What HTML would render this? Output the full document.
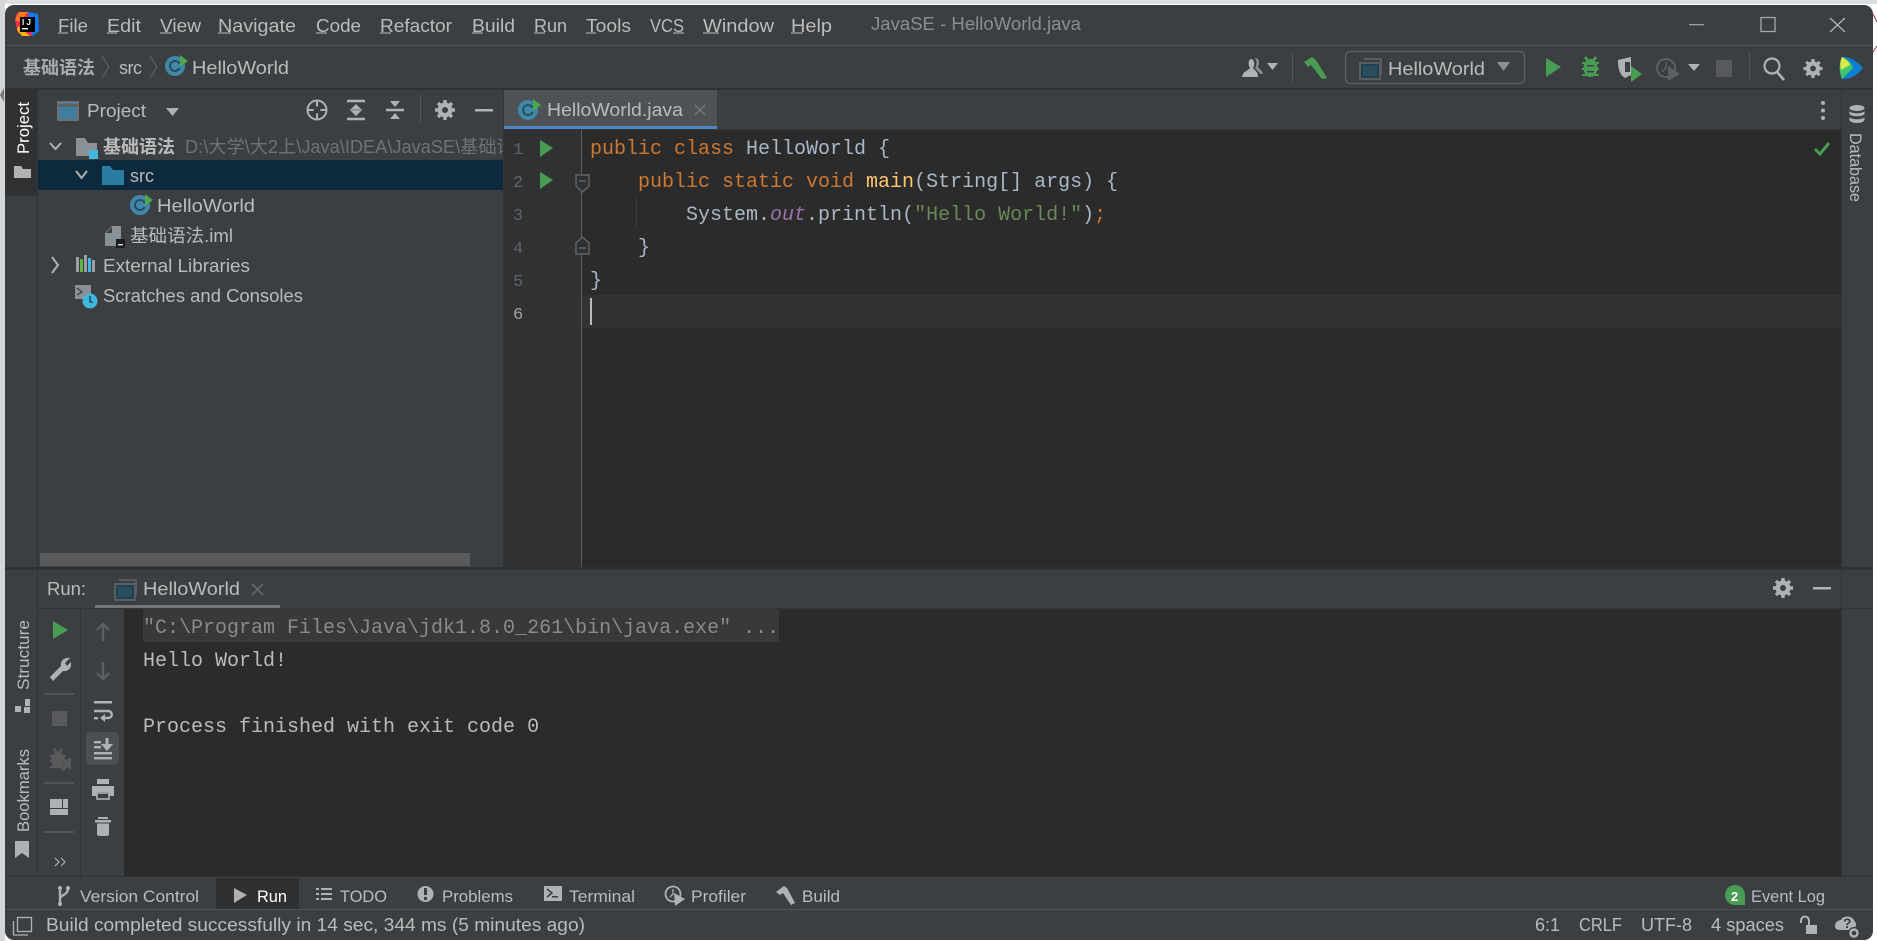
<!DOCTYPE html>
<html><head><meta charset="utf-8"><title>JavaSE - HelloWorld.java</title>
<style>
html,body{margin:0;padding:0;width:1877px;height:941px;overflow:hidden;background:#fff}
svg{display:block}
text{font-family:"Liberation Sans","Noto Sans CJK SC",sans-serif;font-size:18px;fill:#bbbbbb;white-space:pre}
.m{font-family:"Liberation Mono",monospace;font-size:20px;fill:#a9b7c6}
.c{font-family:"Liberation Mono",monospace;font-size:20px;fill:#bbbbbb}
.k{fill:#cc7832}.s{fill:#6a8759}.y{fill:#ffc66d}.o{fill:#9876aa;font-style:italic}
.n{font-family:"Liberation Mono",monospace;font-size:17px;fill:#606366}
.g{fill:#afb1b3}.l{stroke:#afb1b3;fill:none;stroke-width:2}
</style></head><body>
<svg width="1877" height="941" viewBox="0 0 1877 941" xmlns="http://www.w3.org/2000/svg">
<defs>
<g id="cls"><circle cx="10" cy="11" r="10" fill="#3f88aa"/><circle cx="10" cy="11" r="5" fill="none" stroke="#2b4c5c" stroke-width="2"/><rect x="13" y="9" width="4" height="4" fill="#3f88aa"/><path d="M15 0L23 6L15 12Z" fill="#4ca64c"/></g>
<g id="run"><rect x="0" y="6" width="20" height="16" fill="#22404d" stroke="#5a5d5f" stroke-width="2"/><rect x="3" y="9" width="14" height="10" fill="#2a4e5e"/><path d="M4 2H21V17" fill="none" stroke="#5a5d5f" stroke-width="2"/></g>
<g id="gear"><circle cx="10" cy="10" r="5.5" fill="none" stroke="#afb1b3" stroke-width="4"/><path d="M10 0V20M0 10H20M3 3L17 17M17 3L3 17" stroke="#afb1b3" stroke-width="3.4"/><circle cx="10" cy="10" r="3" fill="#3c3f41"/></g>
</defs>

<!-- outside -->
<rect width="1877" height="941" fill="#ffffff"/>
<rect width="1877" height="4" fill="#dcdee0"/>
<rect x="0" y="0" width="5" height="941" fill="#d4d6d8"/>
<path d="M0 95L4 88V102Z" fill="#777"/>
<path d="M1873 14L1877 22M1873 52L1877 46" stroke="#a34" stroke-width="1"/>
<!-- window -->
<rect x="5" y="5" width="1868" height="935" rx="9" fill="#3c3f41"/>

<!-- separators -->
<rect x="5" y="45" width="1868" height="1" fill="#515456"/>
<rect x="5" y="88" width="1868" height="2" fill="#2f3133"/>

<!-- logo -->
<g>
<path d="M17 13L28 12L38 16L39 31L30 36L18 33L15 20Z" fill="#fe2857"/>
<path d="M28 12L38 14L39 31L32 36Z" fill="#087cfa"/>
<path d="M15 20L19 12L28 12L20 22Z" fill="#fe7a1b"/>
<path d="M17 30L22 36L30 36L18 26Z" fill="#fdb60d"/>
<rect x="20" y="17" width="15" height="15" fill="#000"/>
<text x="22" y="25" style="font-size:8px;font-weight:bold;fill:#fff" textLength="9">IJ</text>
<rect x="22" y="28" width="6" height="1.4" fill="#fff"/>
</g>

<!-- menu -->
<g style="font-size:18px">
<text x="58" y="32" textLength="30" lengthAdjust="spacingAndGlyphs">File</text>
<text x="107" y="32" textLength="34" lengthAdjust="spacingAndGlyphs">Edit</text>
<text x="160" y="32" textLength="41" lengthAdjust="spacingAndGlyphs">View</text>
<text x="218" y="32" textLength="78" lengthAdjust="spacingAndGlyphs">Navigate</text>
<text x="316" y="32" textLength="45" lengthAdjust="spacingAndGlyphs">Code</text>
<text x="380" y="32" textLength="72" lengthAdjust="spacingAndGlyphs">Refactor</text>
<text x="472" y="32" textLength="43" lengthAdjust="spacingAndGlyphs">Build</text>
<text x="534" y="32" textLength="33" lengthAdjust="spacingAndGlyphs">Run</text>
<text x="586" y="32" textLength="45" lengthAdjust="spacingAndGlyphs">Tools</text>
<text x="650" y="32" textLength="34" lengthAdjust="spacingAndGlyphs">VCS</text>
<text x="703" y="32" textLength="71" lengthAdjust="spacingAndGlyphs">Window</text>
<text x="791" y="32" textLength="41" lengthAdjust="spacingAndGlyphs">Help</text>
<path d="M58 33H68M107 33H117M160 33H172M218 33H231M316 33H327M380 33H391M472 33H483M534 33H545M586 33H596M673 33H684M703 33H719M791 33H803" stroke="#bbbbbb" stroke-width="1"/>
<text x="871" y="30" textLength="210" lengthAdjust="spacingAndGlyphs" style="fill:#8b8d8f">JavaSE - HelloWorld.java</text>
</g>
<!-- win buttons -->
<rect x="1689" y="24" width="15" height="1.3" fill="#9a9c9e"/>
<rect x="1761" y="17.500" width="14" height="14" fill="none" stroke="#a5a7a9" stroke-width="1.300"/>
<path d="M1830 18L1845 32M1845 18L1830 32" stroke="#b0b2b4" stroke-width="1.300"/>

<!-- breadcrumb -->
<text x="23" y="74" textLength="72" lengthAdjust="spacingAndGlyphs" style="font-weight:bold;fill:#a9abad">基础语法</text>
<path d="M102 56L109 67L102 78" fill="none" stroke="#5c5f61" stroke-width="1.200"/>
<text x="119" y="74" textLength="23">src</text>
<path d="M150 56L157 67L150 78" fill="none" stroke="#5c5f61" stroke-width="1.200"/>
<use href="#cls" x="165" y="55"/>
<text x="192" y="74" textLength="97" lengthAdjust="spacingAndGlyphs">HelloWorld</text>

<!-- top toolbar right -->
<path d="M1251 59C1248 60 1248 65 1250 68C1248 71 1243 71 1242 77H1258C1258 71 1255 71 1253 68C1255 65 1255 60 1251 59Z" fill="#afb1b3"/>
<path d="M1255 58C1259 58 1260 62 1258 67C1260 70 1262 70 1263 74H1260C1259 71 1256 70 1255 68C1257 65 1257 61 1255 58Z" fill="#8b8d8f"/>
<path d="M1267 63H1278L1272.500 70Z" fill="#afb1b3"/>
<rect x="1292" y="52" width="1" height="30" fill="#515456"/>
<path d="M1304 62L1312 57L1316 60L1327 78L1322 79L1311 65L1308 67Z" fill="#4a9c52"/>
<rect x="1345.500" y="51.500" width="179" height="32" rx="5" fill="#3c3f41" stroke="#5e6163" stroke-width="1.300"/>
<use href="#run" x="1360" y="57"/>
<text x="1388" y="75" textLength="97" lengthAdjust="spacingAndGlyphs">HelloWorld</text>
<path d="M1497 62H1510L1503.500 71Z" fill="#8d8f91"/>
<path d="M1546 58L1561 67L1546 77Z" fill="#499c54"/>
<g fill="#499c54"><ellipse cx="1590.500" cy="68" rx="7" ry="9"/><rect x="1582" y="62" width="17" height="2"/><rect x="1582" y="68" width="17" height="2"/><rect x="1582" y="74" width="17" height="2"/><path d="M1586 56L1589 60H1592L1595 56L1597 58L1594 62H1587L1584 58Z"/></g>
<rect x="1587" y="65" width="7" height="1.500" fill="#3c3f41"/><rect x="1587" y="71" width="7" height="1.500" fill="#3c3f41"/>
<path d="M1618 60L1631 57V75L1625 78C1620 75 1618 70 1618 60Z" fill="#afb1b3"/><path d="M1625 62H1630V72H1625Z" fill="#3c3f41"/>
<path d="M1631 66L1642 74L1631 82Z" fill="#499c54"/>
<circle cx="1666" cy="68" r="9" fill="none" stroke="#5d5f61" stroke-width="2"/><path d="M1666 62V68L1662 72" fill="none" stroke="#5d5f61" stroke-width="1.500"/><path d="M1668 66L1680 74L1668 81Z" fill="#5d5f61"/>
<path d="M1688 64H1700L1694 71Z" fill="#afb1b3"/>
<rect x="1716" y="60" width="16" height="17" fill="#59595b"/>
<rect x="1749" y="52" width="1" height="30" fill="#515456"/>
<circle cx="1772" cy="66" r="7.500" fill="none" stroke="#afb1b3" stroke-width="2.200"/><path d="M1777 72L1784 80" stroke="#afb1b3" stroke-width="2.600"/>
<use href="#gear" transform="translate(1803.500,59) scale(.95)"/>
<path d="M1842 57C1851 57 1857 61 1863 68C1858 75 1851 79 1842 79C1839 72 1839 64 1842 57Z" fill="#0b7fd1"/>
<path d="M1842 57C1849 60 1852 64 1853 68L1842 79C1839 72 1839 64 1842 57Z" fill="#3ec46d"/>
<path d="M1842 57C1846 59 1849 62 1850 65L1841 70C1840 65 1840 61 1842 57Z" fill="#d9e84a"/>

<!-- left stripe -->
<rect x="5" y="90" width="32" height="106" fill="#2f3133"/>
<rect x="37" y="90" width="1" height="787" fill="#323436"/>
<text transform="translate(29,154) rotate(-90)" textLength="52" lengthAdjust="spacingAndGlyphs" style="fill:#ffffff;font-size:17px">Project</text>
<path d="M14 166H21L23 169H31V178H14Z" fill="#b0b2b4"/>

<text transform="translate(29,690) rotate(-90)" textLength="70" lengthAdjust="spacingAndGlyphs" style="font-size:17px">Structure</text>
<g fill="#afb1b3"><rect x="25" y="699" width="5" height="7"/><rect x="15" y="706" width="6" height="6"/><rect x="24" y="707" width="6" height="6"/></g>
<text transform="translate(29,832) rotate(-90)" textLength="83" lengthAdjust="spacingAndGlyphs" style="font-size:17px">Bookmarks</text>
<path d="M15 841H29V858L22 853L15 858Z" fill="#afb1b3"/>

<!-- project panel -->
<rect x="58" y="102" width="20" height="18" fill="#3d7f9c" stroke="#6e7274" stroke-width="2"/>
<path d="M58 105.500H78" stroke="#5e6264" stroke-width="3"/>
<text x="87" y="117" textLength="59" lengthAdjust="spacingAndGlyphs">Project</text>
<path d="M166 108H179L172.500 116Z" fill="#afb1b3"/>
<circle cx="317" cy="110" r="9.500" fill="none" stroke="#afb1b3" stroke-width="2"/>
<path d="M317 100V120M307 110H327" stroke="#afb1b3" stroke-width="2"/><circle cx="317" cy="110" r="3.500" fill="#3c3f41"/>
<path d="M347 101H365M347 119H365" stroke="#afb1b3" stroke-width="2.500"/>
<path d="M356 104L351 109H361ZM356 116L351 111H361Z" fill="#afb1b3"/><rect x="350" y="109.300" width="12" height="1.500" fill="#afb1b3"/>
<path d="M386 110H404" stroke="#afb1b3" stroke-width="2.500"/>
<path d="M395 107L390 101H400ZM395 113L390 119H400Z" fill="#afb1b3"/>
<rect x="420" y="95" width="1" height="29" fill="#515456"/>
<use href="#gear" x="435" y="100"/>
<rect x="475" y="109" width="18" height="2.500" fill="#afb1b3"/>

<!-- tree -->
<rect x="38" y="160" width="465" height="30" fill="#0d293e"/>
<path d="M50 143L55.500 149L61 143" class="l" stroke-width="1.500"/>
<path d="M76 171L81.500 178L87 171" class="l" stroke-width="1.500"/>
<path d="M52 257L58 265L52 273" class="l" stroke-width="1.500"/>
<path d="M76 138H85L88 143H97V156H76Z" fill="#8a9196"/>
<rect x="89" y="150" width="9" height="9" fill="#40b6e0"/>
<text x="103" y="153" textLength="72" lengthAdjust="spacingAndGlyphs" style="font-weight:bold;fill:#bbbbbb">基础语法</text>
<svg x="0" y="130" width="503" height="40"><text x="185" y="23" style="fill:#6f7173" textLength="348" lengthAdjust="spacingAndGlyphs">D:\大学\大2上\Java\IDEA\JavaSE\基础语法</text></svg>
<path d="M102 166H110L113 170H124V185H102Z" fill="#2a7ba4"/>
<text x="130" y="182" textLength="24" style="fill:#bbbbbb">src</text>
<use href="#cls" x="130" y="194"/>
<text x="157" y="212" textLength="98" lengthAdjust="spacingAndGlyphs">HelloWorld</text>
<path d="M112 226H121V240H125V246H105V233Z" fill="#8a9196"/>
<path d="M106 233L112 227V233Z" fill="#3c3f41"/>
<rect x="116" y="239" width="9" height="9" fill="#1d1d1f"/><rect x="118" y="244" width="5" height="1.400" fill="#ddd"/>
<text x="130" y="242" textLength="103" lengthAdjust="spacingAndGlyphs">基础语法.iml</text>
<rect x="76" y="257" width="3" height="15" fill="#9aa0a4"/><rect x="80" y="259" width="3" height="13" fill="#62b543"/><rect x="84" y="255" width="3" height="17" fill="#9aa0a4"/><rect x="88" y="258" width="3" height="14" fill="#40b6e0"/><rect x="92" y="260" width="3" height="12" fill="#9aa0a4"/>
<text x="103" y="272" textLength="147" lengthAdjust="spacingAndGlyphs">External Libraries</text>
<rect x="75" y="285" width="16" height="14" fill="#8a9196"/><path d="M77 288L82 292L77 295" fill="none" stroke="#3c3f41" stroke-width="1.300"/>
<circle cx="90" cy="301" r="7.500" fill="#40b6e0"/><path d="M90 296V302H93" fill="none" stroke="#1d3a48" stroke-width="1.300"/>
<text x="103" y="302" textLength="200" lengthAdjust="spacingAndGlyphs">Scratches and Consoles</text>
<rect x="40" y="553" width="430" height="13" fill="#585a5c"/>
<rect x="5" y="567" width="1868" height="3" fill="#2f3133"/>

<!-- tab strip -->
<rect x="504" y="90" width="213" height="37" fill="#4e5254"/>
<rect x="504" y="126" width="213" height="4" fill="#4a88c7"/>
<rect x="503" y="90" width="1" height="477" fill="#323436"/>
<use href="#cls" x="518" y="99"/>
<text x="547" y="116" textLength="136" lengthAdjust="spacingAndGlyphs">HelloWorld.java</text>
<path d="M695 105L705 115M705 105L695 115" stroke="#777a7c" stroke-width="1.300"/>
<circle cx="1823" cy="103" r="2" fill="#afb1b3"/><circle cx="1823" cy="110.500" r="2" fill="#afb1b3"/><circle cx="1823" cy="118" r="2" fill="#afb1b3"/>
<rect x="504" y="129" width="1337" height="1" fill="#323436"/>

<!-- editor -->
<rect x="504" y="130" width="1337" height="437" fill="#2b2b2b"/>
<rect x="504" y="130" width="77" height="437" fill="#2f3133"/>
<rect x="581" y="130" width="1" height="437" fill="#5a5d5f"/>
<rect x="504" y="295" width="77" height="33" fill="#323232"/>
<rect x="582" y="295" width="1259" height="33" fill="#323232"/>
<rect x="636" y="197" width="1" height="32" fill="#3a3a3a"/>
<text class="n" x="513" y="154">1</text>
<text class="n" x="513" y="187">2</text>
<text class="n" x="513" y="220">3</text>
<text class="n" x="513" y="253">4</text>
<text class="n" x="513" y="286">5</text>
<text class="n" x="513" y="319" style="fill:#a4a3a3">6</text>
<path d="M540 140L553 148L540 157ZM540 172L553 180L540 189Z" fill="#499c54"/>
<path d="M576 175H589V186L582.500 192L576 186Z" fill="#2f3133" stroke="#5f6264" stroke-width="1.500"/><path d="M579 181H586" stroke="#5f6264" stroke-width="1.500"/>
<path d="M576 254H589V243L582.500 237L576 243Z" fill="#2f3133" stroke="#5f6264" stroke-width="1.500"/><path d="M579 248H586" stroke="#5f6264" stroke-width="1.500"/>
<text class="m" x="590" y="154"><tspan class="k">public class </tspan>HelloWorld {</text>
<text class="m" x="638" y="187"><tspan class="k">public static void </tspan><tspan class="y">main</tspan>(String[] args) {</text>
<text class="m" x="686" y="220">System.<tspan class="o">out</tspan>.println(<tspan class="s">"Hello World!"</tspan>)<tspan class="k">;</tspan></text>
<text class="m" x="638" y="253">}</text>
<text class="m" x="590" y="286">}</text>
<rect x="590" y="298" width="2" height="27" fill="#bbbbbb"/>
<path d="M1815 149L1820 154L1829 143" fill="none" stroke="#499c54" stroke-width="3"/>

<!-- right stripe -->
<rect x="1841" y="90" width="1" height="787" fill="#323436"/>
<g fill="#afb1b3"><ellipse cx="1857" cy="108" rx="7.500" ry="3"/><path d="M1849.500 111C1851 114 1863 114 1864.500 111V114C1863 117 1851 117 1849.500 114Z"/><path d="M1849.500 117C1851 120 1863 120 1864.500 117V120C1863 124 1851 124 1849.500 120Z"/></g>
<text transform="translate(1850,133) rotate(90)" textLength="69" lengthAdjust="spacingAndGlyphs" style="font-size:17px">Database</text>

<!-- run panel -->
<text x="47" y="595" textLength="39" lengthAdjust="spacingAndGlyphs">Run:</text>
<use href="#run" x="115" y="578"/>
<text x="143" y="595" textLength="97" lengthAdjust="spacingAndGlyphs">HelloWorld</text>
<path d="M252 584L263 595M263 584L252 595" stroke="#6f7274" stroke-width="1.300"/>
<rect x="95" y="605" width="185" height="4" fill="#737577"/>
<rect x="38" y="608" width="1835" height="1" fill="#323436"/>
<use href="#gear" x="1773" y="578"/>
<rect x="1813" y="587" width="18" height="2.500" fill="#afb1b3"/>

<rect x="80" y="609" width="1" height="268" fill="#323436"/>
<rect x="124" y="609" width="1717" height="268" fill="#2b2b2b"/>
<rect x="143" y="609" width="636" height="33" fill="#393939"/>
<text class="c" x="143" y="633" style="fill:#8a8a8a">"C:\Program Files\Java\jdk1.8.0_261\bin\java.exe" ...</text>
<text class="c" x="143" y="666">Hello World!</text>
<text class="c" x="143" y="732">Process finished with exit code 0</text>

<!-- run col1 -->
<path d="M53 621L68 630L53 639Z" fill="#499c54"/>
<path d="M50 677L61 666C60 661 64 657 70 658L65 663L67 666L71 662C72 668 68 672 63 671L53 681Z" fill="#afb1b3"/>
<rect x="44" y="693" width="30" height="2" fill="#515456"/>
<rect x="52" y="711" width="15" height="15" fill="#59595b"/>
<g fill="#59595b"><ellipse cx="58" cy="760" rx="7" ry="8"/><rect x="50" y="755" width="16" height="2"/><rect x="50" y="760" width="16" height="2"/><rect x="50" y="766" width="16" height="2"/><path d="M55 748L58 752L61 748L63 750L60 754H56L53 750Z"/><path d="M62 762L71 757V770L68 767L63 771L61 769L65 765Z"/></g>
<rect x="44" y="782" width="30" height="2" fill="#515456"/>
<g fill="#afb1b3"><rect x="50" y="799" width="12" height="9"/><rect x="63" y="799" width="5" height="9"/><rect x="50" y="809" width="18" height="6"/></g>
<rect x="44" y="831" width="30" height="2" fill="#515456"/>
<path d="M55 858L59 862L55 866M61 858L65 862L61 866" fill="none" stroke="#afb1b3" stroke-width="1.200"/>

<!-- run col2 -->
<path d="M103 624V641M97 630L103 624L109 630" fill="none" stroke="#5d5f61" stroke-width="2.400"/>
<path d="M103 662V679M97 673L103 679L109 673" fill="none" stroke="#5d5f61" stroke-width="2.400"/>
<rect x="94" y="701" width="18" height="2.500" fill="#afb1b3"/>
<path d="M94 711H108C113 711 113 718 108 718H102" fill="none" stroke="#afb1b3" stroke-width="2.400"/>
<path d="M105 714L100 718L105 722Z" fill="#afb1b3"/><rect x="94" y="717" width="4" height="2.400" fill="#afb1b3"/>
<rect x="86" y="732" width="33" height="33" rx="5" fill="#4c5052"/>
<g fill="#afb1b3"><rect x="94" y="741" width="7" height="2.400"/><rect x="94" y="746" width="7" height="2.400"/><rect x="94" y="752" width="18" height="2.400"/><rect x="94" y="757" width="18" height="2.400"/></g>
<rect x="105.500" y="738" width="3" height="7" fill="#afb1b3"/><path d="M101 744H113L107 751Z" fill="#afb1b3"/>
<g fill="#afb1b3"><rect x="97" y="779" width="12" height="5"/><path d="M92 786H114V796H109V792H97V796H92Z"/></g><rect x="97" y="793" width="12" height="6" fill="none" stroke="#afb1b3" stroke-width="1.600"/>
<g fill="#afb1b3"><rect x="98" y="817" width="10" height="2"/><rect x="95" y="820" width="16" height="2.500"/><path d="M97 823.500H109V835L107 836H99L97 835Z"/></g>

<!-- bottom bars -->
<rect x="5" y="877" width="1868" height="32" fill="#3c3f41"/>
<rect x="5" y="876" width="1868" height="1" fill="#323436"/>
<rect x="5" y="909" width="1868" height="1" fill="#515456"/>
<circle cx="60" cy="888" r="2" fill="#afb1b3"/><circle cx="68" cy="888" r="2" fill="#afb1b3"/><circle cx="60" cy="904" r="2" fill="#afb1b3"/>
<path d="M60 888V904M68 888C68 896 60 894 60 899" fill="none" stroke="#afb1b3" stroke-width="2.400"/>
<text x="80" y="902" textLength="119" lengthAdjust="spacingAndGlyphs" style="font-size:17px">Version Control</text>
<rect x="216" y="878" width="83" height="31" fill="#2e3032"/>
<path d="M234 888L247 895L234 903Z" fill="#afb1b3"/>
<text x="257" y="902" textLength="30" lengthAdjust="spacingAndGlyphs" style="font-size:17px;fill:#ffffff">Run</text>
<g fill="#afb1b3"><rect x="316" y="888" width="3" height="2"/><rect x="321" y="888" width="11" height="2"/><rect x="316" y="893" width="3" height="2"/><rect x="321" y="893" width="11" height="2"/><rect x="316" y="898" width="3" height="2"/><rect x="321" y="898" width="11" height="2"/></g>
<text x="340" y="902" textLength="47" lengthAdjust="spacingAndGlyphs" style="font-size:17px">TODO</text>
<circle cx="425.500" cy="894" r="8" fill="#afb1b3"/><rect x="424" y="888" width="3" height="7" fill="#3c3f41"/><rect x="424" y="897" width="3" height="3" fill="#3c3f41"/>
<text x="442" y="902" textLength="71" lengthAdjust="spacingAndGlyphs" style="font-size:17px">Problems</text>
<rect x="544" y="886" width="18" height="15" fill="#afb1b3"/><path d="M547 889L552 893L547 897" fill="none" stroke="#3c3f41" stroke-width="1.500"/><rect x="552" y="896" width="6" height="1.500" fill="#3c3f41"/>
<text x="569" y="902" textLength="66" lengthAdjust="spacingAndGlyphs" style="font-size:17px">Terminal</text>
<circle cx="673" cy="894" r="7.500" fill="none" stroke="#afb1b3" stroke-width="1.800"/><path d="M673 889V894L670 897" fill="none" stroke="#afb1b3" stroke-width="1.300"/><path d="M674 893L685 899L675 906Z" fill="#afb1b3"/>
<text x="691" y="902" textLength="55" lengthAdjust="spacingAndGlyphs" style="font-size:17px">Profiler</text>
<path d="M776 892L784 886L787 888L795 903L791 905L783 893L780 895Z" fill="#afb1b3"/>
<text x="802" y="902" textLength="38" lengthAdjust="spacingAndGlyphs" style="font-size:17px">Build</text>
<path d="M1735 885A10 10 0 1 1 1735 905L1745 905V895A10 10 0 0 0 1735 885Z" fill="#499c54"/>
<circle cx="1735" cy="895" r="10" fill="#499c54"/>
<text x="1731" y="901" style="font-size:13px;font-weight:bold;fill:#fff">2</text>
<text x="1751" y="902" textLength="74" lengthAdjust="spacingAndGlyphs" style="font-size:17px">Event Log</text>

<!-- status -->
<rect x="17.500" y="917.500" width="14" height="14" fill="none" stroke="#afb1b3" stroke-width="1.300"/>
<path d="M13.500 921V935H28" fill="none" stroke="#afb1b3" stroke-width="1.300"/>
<text x="46" y="931" textLength="539" lengthAdjust="spacingAndGlyphs">Build completed successfully in 14 sec, 344 ms (5 minutes ago)</text>
<text x="1535" y="931" textLength="25" lengthAdjust="spacingAndGlyphs">6:1</text>
<text x="1579" y="931" textLength="43" lengthAdjust="spacingAndGlyphs">CRLF</text>
<text x="1641" y="931" textLength="51" lengthAdjust="spacingAndGlyphs">UTF-8</text>
<text x="1711" y="931" textLength="73" lengthAdjust="spacingAndGlyphs">4 spaces</text>
<rect x="1806" y="925" width="11" height="9" fill="#afb1b3"/>
<path d="M1801 923V921C1801 915 1809 915 1809 921V925" fill="none" stroke="#afb1b3" stroke-width="2"/>
<path d="M1835 926C1835 921 1840 920 1841 920C1843 915 1853 915 1855 922C1857 923 1856 929 1852 930H1840C1837 930 1835 929 1835 926Z" fill="#afb1b3"/>
<text x="1843" y="928" style="font-size:14px;font-weight:bold;fill:#3c3f41">?</text>
<circle cx="1854" cy="933" r="6" fill="#3c3f41"/><circle cx="1854" cy="933" r="3.500" fill="none" stroke="#afb1b3" stroke-width="2.400"/>
</svg>
</body></html>
